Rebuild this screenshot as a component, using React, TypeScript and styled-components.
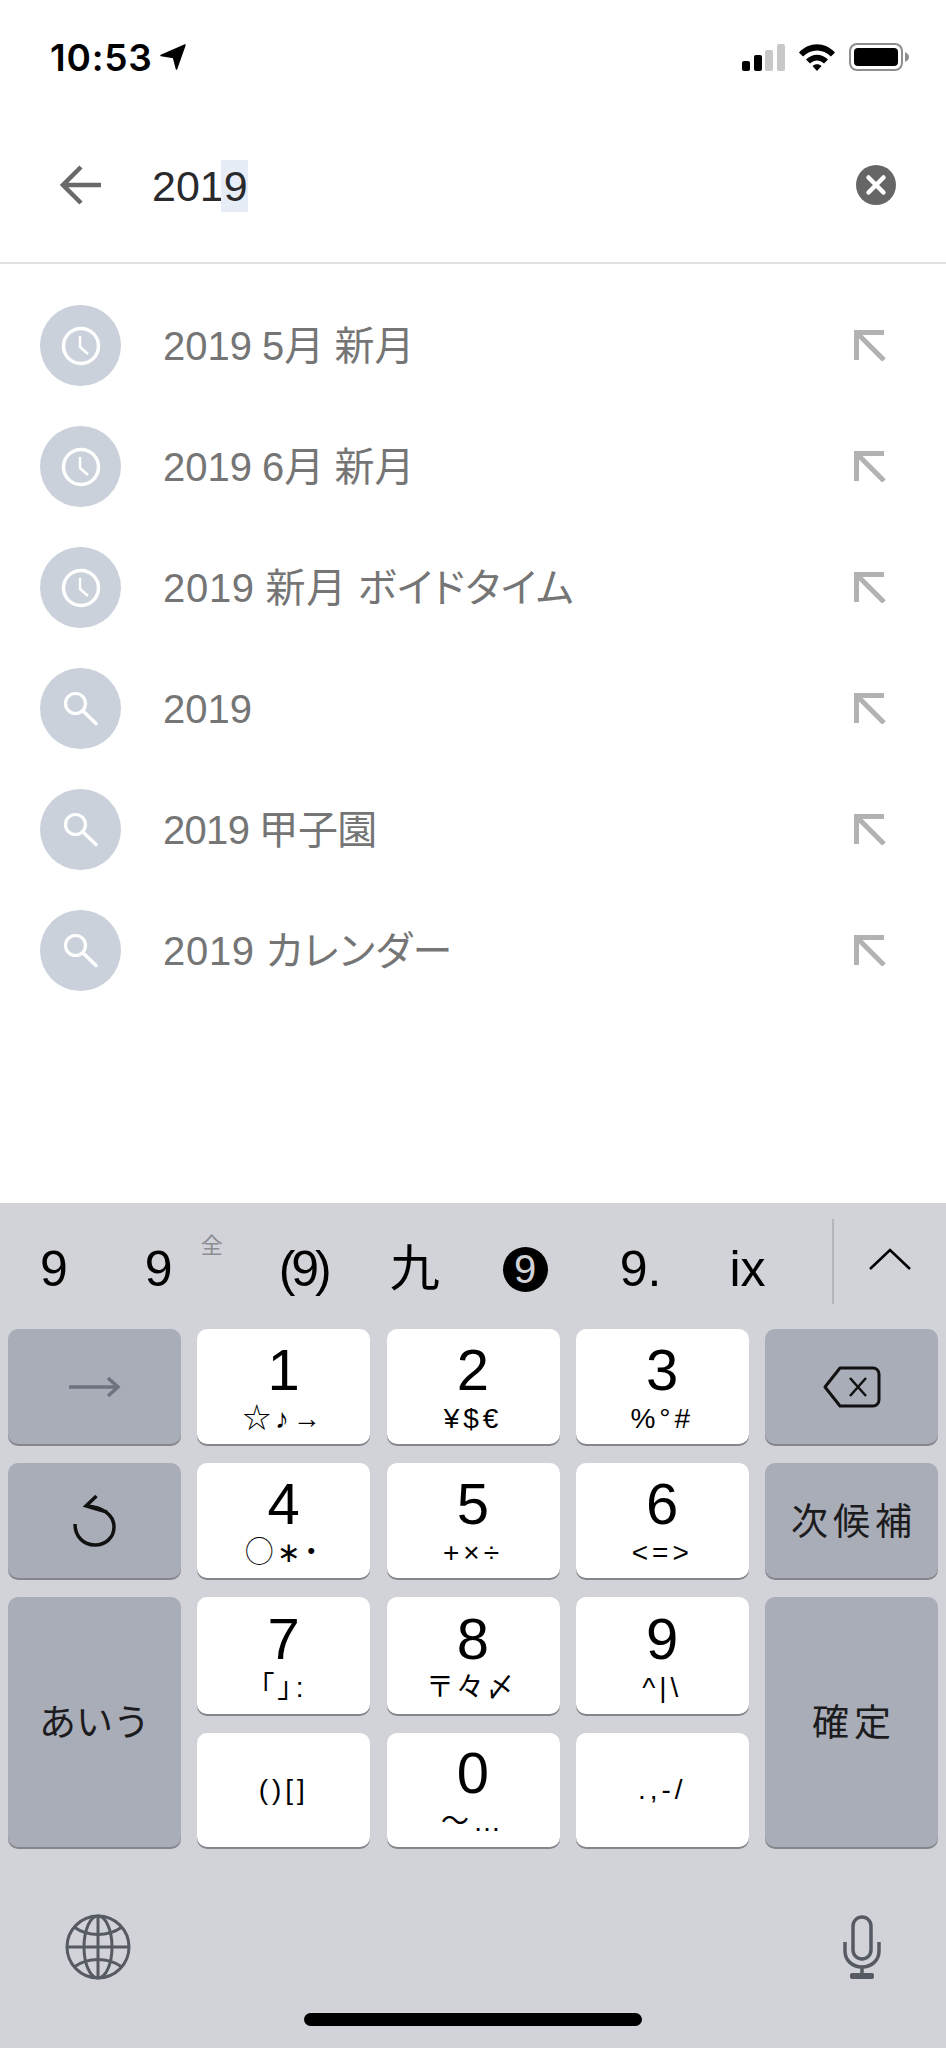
import * as React from "react"
import styled, { createGlobalStyle } from "styled-components"

const GlobalStyle = createGlobalStyle`
  html, body {
    margin: 0;
    padding: 0;
    background: #fff;
  }
  * {
    box-sizing: border-box;
  }
`

const sans = `"Liberation Sans", "Noto Sans CJK JP", sans-serif`

const suggestions = [
  { kind: "clock", text: "2019 5月 新月", tracking: 0 },
  { kind: "clock", text: "2019 6月 新月", tracking: 0 },
  { kind: "clock", text: "2019 新月 ボイドタイム", tracking: 0.7 },
  { kind: "search", text: "2019", tracking: 0 },
  { kind: "search", text: "2019 甲子園", tracking: -0.7 },
  { kind: "search", text: "2019 カレンダー", tracking: 0.7 },
]

export default function App() {
  return (
    <Page>
      <GlobalStyle />
      <StatusBar>
        <Time>10:53</Time>
        <svg width="26" height="26" viewBox="0 0 26 26">
          <path d="M1 11.500 25 1 16.500 25 13.500 13.500Z" fill="#000" stroke="#000" strokeWidth="1.500" strokeLinejoin="round" />
        </svg>
        <StatusIcons>
          <svg width="43" height="27" viewBox="0 0 43 27">
            <rect x="0" y="17" width="8" height="10" rx="2" fill="#000" />
            <rect x="12" y="11" width="8" height="16" rx="2" fill="#000" />
            <rect x="23" y="6" width="8" height="21" rx="2" fill="#c8c8c8" />
            <rect x="35" y="0" width="8" height="27" rx="2" fill="#c8c8c8" />
          </svg>
          <svg width="38" height="28" viewBox="0 0 38 28">
            <path d="M1 9.500C11 -1.500 27 -1.500 37 9.500L33 13.500C25 5.500 13 5.500 5 13.500Z" fill="#000" />
            <path d="M8 16.500C14.500 10 23.500 10 30 16.500L26 20.500C21.500 16.500 16.500 16.500 12 20.500Z" fill="#000" />
            <path d="M14.500 23C17 20.700 21 20.700 23.500 23L19 28Z" fill="#000" />
          </svg>
          <svg width="60" height="28" viewBox="0 0 60 28">
            <rect x="1" y="1" width="52" height="26" rx="7" fill="none" stroke="#8e8e8e" strokeWidth="2" />
            <rect x="5" y="5" width="44" height="18" rx="4" fill="#000" />
            <path d="M56 9c2.500 1 4 3 4 5s-1.500 4-4 5Z" fill="#8e8e8e" />
          </svg>
        </StatusIcons>
      </StatusBar>

      <SearchBar>
        <svg width="42" height="40" viewBox="0 0 42 40">
          <path d="M41 20H4M21 2 3 20l18 18" fill="none" stroke="#696969" strokeWidth="4.500" />
        </svg>
        <Query>
          201<Selected>9</Selected>
        </Query>
        <svg width="40" height="40" viewBox="0 0 40 40">
          <circle cx="20" cy="20" r="20" fill="#666" />
          <path d="M12.500 12.500l15 15M27.500 12.500l-15 15" stroke="#fff" strokeWidth="4.500" strokeLinecap="round" />
        </svg>
      </SearchBar>

      <SuggestList>
        {suggestions.map(s => (
          <SuggestRow key={s.text}>
            <IconCircle>
              {s.kind === "clock" ? (
                <svg width="40" height="40" viewBox="0 0 40 40">
                  <circle cx="20" cy="20" r="17.500" fill="none" stroke="#fff" strokeWidth="3.500" />
                  <path d="M19 10v11l8 7" fill="none" stroke="#fff" strokeWidth="2.500" />
                </svg>
              ) : (
                <svg width="40" height="40" viewBox="0 0 40 40">
                  <circle cx="14.500" cy="14.500" r="10" fill="none" stroke="#fff" strokeWidth="3.200" />
                  <path d="M22 22l13 12.500" stroke="#fff" strokeWidth="3.500" strokeLinecap="round" />
                </svg>
              )}
            </IconCircle>
            <SuggestText $tracking={s.tracking}>{s.text}</SuggestText>
            <svg width="32" height="31" viewBox="0 0 32 31">
              <path d="M2.500 30V2.500H30M3 3l27 27" fill="none" stroke="#b2b2b2" strokeWidth="5" />
            </svg>
          </SuggestRow>
        ))}
      </SuggestList>

      <Keyboard>
        <CandidateBar>
          <Candidate $left={40}>9</Candidate>
          <Candidate $left={77}>
            9<FullWidthMark>全</FullWidthMark>
          </Candidate>
          <ParenCandidate $left={106}>(9)</ParenCandidate>
          <Candidate $left={62}>九</Candidate>
          <Candidate $left={63}>
            <BlackCircle>9</BlackCircle>
          </Candidate>
          <Candidate $left={72}>9.</Candidate>
          <Candidate $left={68}>ix</Candidate>
          <CandidateMore>
            <svg width="42" height="22" viewBox="0 0 42 22">
              <path d="M1 21 21 2l20 19" fill="none" stroke="#000" strokeWidth="2.500" />
            </svg>
          </CandidateMore>
        </CandidateBar>

        <KeyGrid>
          <FnKey>
            <svg width="52" height="22" viewBox="0 0 52 22">
              <path d="M0 11h49M39 2l10 9-10 9" fill="none" stroke="#6f7380" strokeWidth="3.500" />
            </svg>
          </FnKey>
          <NumKey digit="1" sub="☆♪→" />
          <NumKey digit="2" sub="¥$€" />
          <NumKey digit="3" sub="%°#" />
          <FnKey>
            <svg width="58" height="42" viewBox="0 0 58 42">
              <path d="M17 2h33a6 6 0 0 1 6 6v26a6 6 0 0 1-6 6H17L2 21Z" fill="none" stroke="#111" strokeWidth="3" strokeLinejoin="round" />
              <path d="M27 12l16 18M43 12 27 30" stroke="#111" strokeWidth="2.500" />
            </svg>
          </FnKey>

          <FnKey>
            <svg width="44" height="52" viewBox="0 0 44 52">
              <path d="M23.500 1 13 11l21 6M13 11C30 12 41 20 41 32 41 43 32 50 22 50 10 50 2 41 2 29" fill="none" stroke="#111" strokeWidth="3.500" />
            </svg>
          </FnKey>
          <NumKey digit="4" sub="◯∗・" />
          <NumKey digit="5" sub="+×÷" />
          <NumKey digit="6" sub="<=>" />
          <FnKey>
            <FnLabel $spacing={5}>次候補</FnLabel>
          </FnKey>

          <TallFnKey>
            <FnLabel $spacing={0}>あいう</FnLabel>
          </TallFnKey>
          <NumKey digit="7" sub="「」:" />
          <NumKey digit="8" sub="〒々〆" />
          <NumKey digit="9" sub="^|\" />
          <TallFnKey>
            <FnLabel $spacing={5}>確定</FnLabel>
          </TallFnKey>

          <NumKey sub="()[]" />
          <NumKey digit="0" sub="〜…" />
          <NumKey sub=".,-/" />
        </KeyGrid>

        <BottomRow>
          <svg width="66" height="66" viewBox="0 0 66 66">
            <g fill="none" stroke="#565a63" strokeWidth="3">
              <circle cx="33" cy="33" r="31" />
              <ellipse cx="33" cy="33" rx="14" ry="31" />
              <path d="M33 2v62M2 33h62" />
              <path d="M9 13c14 10 34 10 48 0M9 53c14-10 34-10 48 0" />
            </g>
          </svg>
          <svg width="38" height="64" viewBox="0 0 38 64">
            <g fill="none" stroke="#565a63" strokeWidth="3.500">
              <rect x="10" y="2" width="18" height="42" rx="9" />
              <path d="M2 27v9c0 9 7 16 17 16s17-7 17-16v-9M19 52v9" />
            </g>
            <rect x="7" y="58" width="24" height="6" rx="2" fill="#565a63" />
          </svg>
        </BottomRow>
        <HomeIndicator />
      </Keyboard>
    </Page>
  )
}

const NumKey = ({ digit, sub }: { digit?: string; sub: string }) => (
  <Key>
    {digit && <Digit>{digit}</Digit>}
    <SubLabel>{sub}</SubLabel>
  </Key>
)

const Page = styled.div`
  width: 946px;
  height: 2048px;
  display: flex;
  flex-direction: column;
  overflow: hidden;
  background: #fff;
  font-family: ${sans};
`

const StatusBar = styled.div`
  height: 114px;
  padding: 0 37px 0 50px;
  display: flex;
  align-items: center;
  gap: 7px;
`

const Time = styled.span`
  font: 600 37px/1 Inter, "Liberation Sans", sans-serif;
  color: #000;
  letter-spacing: 0.8px;
`

const StatusIcons = styled.div`
  margin-left: auto;
  display: flex;
  align-items: center;
  gap: 13px;
`

const SearchBar = styled.div`
  height: 150px;
  padding: 0 50px 6px 60px;
  display: flex;
  align-items: center;
  border-bottom: 2px solid #e0e0e0;
`

const Query = styled.div`
  margin: 2px 0 0 50px;
  flex: 1;
  font-size: 43px;
  line-height: 52px;
  color: #2a2a2c;
`

const Selected = styled.span`
  display: inline-block;
  margin-left: -3px;
  padding-left: 3px;
  background: #e6edf7;
`

const SuggestList = styled.div`
  flex: 1;
  padding-top: 21px;
`

const SuggestRow = styled.div`
  height: 121px;
  padding: 0 60px 0 40px;
  display: flex;
  align-items: center;
`

const IconCircle = styled.div`
  width: 81px;
  height: 81px;
  border-radius: 50%;
  background: #cbd1db;
  display: flex;
  align-items: center;
  justify-content: center;
`

const SuggestText = styled.div<{ $tracking: number }>`
  flex: 1;
  margin-left: 42px;
  font-size: 40px;
  line-height: 50px;
  color: #757575;
  word-spacing: -1px;
  letter-spacing: ${p => p.$tracking}px;
  font-feature-settings: "palt";
`

const Keyboard = styled.div`
  height: 845px;
  background: #d1d3d9;
  display: flex;
  flex-direction: column;
`

const CandidateBar = styled.div`
  height: 126px;
  display: flex;
  align-items: center;
  padding-top: 6px;
  color: #000;
`

const Candidate = styled.div<{ $left: number }>`
  position: relative;
  margin-left: ${p => p.$left}px;
  font-size: 50px;
  line-height: 60px;
`

const ParenCandidate = styled(Candidate)`
  letter-spacing: -4px;
`

const FullWidthMark = styled.span`
  position: absolute;
  left: 56px;
  top: -6px;
  font-size: 22px;
  line-height: 26px;
  color: #8b8d93;
`

const BlackCircle = styled.span`
  display: flex;
  align-items: center;
  justify-content: center;
  width: 45px;
  height: 45px;
  border-radius: 50%;
  background: #000;
  color: #d1d3d9;
  font-size: 40px;
`

const CandidateMore = styled.div`
  margin: 0 0 16px auto;
  width: 114px;
  height: 85px;
  padding-bottom: 4px;
  border-left: 2px solid #b4b6bc;
  display: flex;
  align-items: center;
  justify-content: center;
`

const KeyGrid = styled.div`
  padding: 0 8px;
  display: grid;
  grid-template-columns: repeat(5, 173px);
  grid-template-rows: 115px 115px 117px 114px;
  column-gap: 16.25px;
  row-gap: 19px;
`

const Key = styled.div`
  border-radius: 10px;
  background: #fff;
  box-shadow: 0 2px 0 #85868c;
  display: flex;
  flex-direction: column;
  align-items: center;
  justify-content: center;
`

const FnKey = styled(Key)`
  background: #a9adb8;
`

const TallFnKey = styled(FnKey)`
  grid-row: span 2;
`

const Digit = styled.div`
  margin-bottom: 4px;
  font-size: 58px;
  line-height: 60px;
  color: #000;
`

const SubLabel = styled.div`
  font-size: 28px;
  line-height: 30px;
  letter-spacing: 4px;
  color: #000;
  font-feature-settings: "palt";
`

const FnLabel = styled.div<{ $spacing: number }>`
  padding: 0 0 4px ${p => p.$spacing}px;
  font-size: 37px;
  letter-spacing: ${p => p.$spacing}px;
  color: #1c1c1e;
`

const BottomRow = styled.div`
  margin-top: 67px;
  padding: 0 65px;
  display: flex;
  justify-content: space-between;
  align-items: center;
`

const HomeIndicator = styled.div`
  margin: 33px auto 0;
  width: 338px;
  height: 13px;
  border-radius: 7px;
  background: #000;
`
